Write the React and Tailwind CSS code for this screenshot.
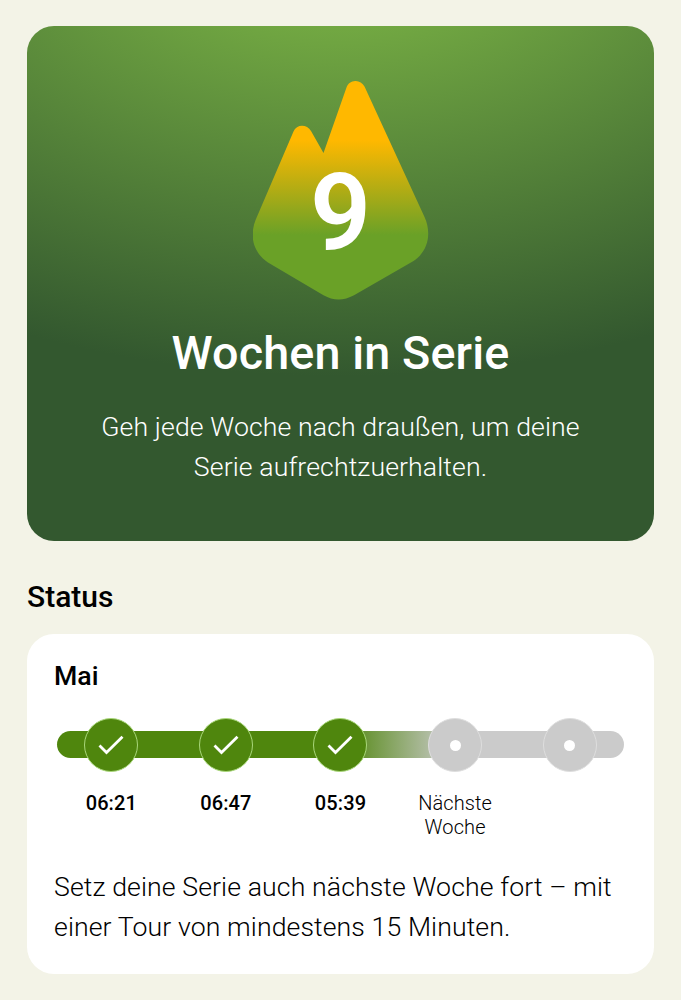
import React from "react";

const weeks = [
  { label: "06:21", done: true },
  { label: "06:47", done: true },
  { label: "05:39", done: true },
  { label: "Nächste Woche", done: false },
  { label: "", done: false },
];

const StreakFlame = ({ count }) => (
  <div className="relative h-[220px] w-[176px]">
    <svg viewBox="0 0 176 220" className="h-full w-full" fill="none">
      <defs>
        <linearGradient
          id="flame"
          x1="0"
          y1="0"
          x2="0"
          y2="220"
          gradientUnits="userSpaceOnUse"
        >
          <stop offset="0.27" stopColor="#ffb800" />
          <stop offset="0.7" stopColor="#6aa127" />
        </linearGradient>
      </defs>
      <path
        d="M70.5 72L93.500 6.500C96.500 -2 107.500 -2 111.500 5.500L171.500 136C179 152.500 175 170.500 160.500 180L101 214.300C90.500 220 80.500 220 70.500 214.300L15 181.500C0 171.500 -4 154.500 3 138L40.500 50.500C43.500 43 54 43 58 50Z"
        fill="url(#flame)"
      />
    </svg>
    <span className="absolute inset-x-0 top-[69px] text-center text-[107px] leading-[125px] font-semibold text-white">
      {count}
    </span>
  </div>
);

const WeekDot = ({ done }) => (
  <div
    className={
      done
        ? "flex size-[54px] items-center justify-center rounded-full border border-[#a9d77b] bg-[#4f860d]"
        : "flex size-[54px] items-center justify-center rounded-full border border-[#dedede] bg-[#cbcbcb]"
    }
  >
    {done ? (
      <svg viewBox="0 0 26 20" className="h-5 w-[26px]" fill="none">
        <path d="M1.500 10.500L8.500 17.500L24.500 1.800" stroke="#fff" strokeWidth="2.8" />
      </svg>
    ) : (
      <span className="size-[11px] rounded-full bg-white" />
    )}
  </div>
);

const App = () => {
  return (
    <main className="h-[1000px] w-[681px] bg-[#f3f3e7] px-[27px] pt-[26px] font-[Roboto,sans-serif] text-black">
      <section className="flex h-[515px] flex-col items-center rounded-[27px] bg-[radial-gradient(ellipse_750px_450px_at_50%_-100px,#72a842_22%,#33582f_100%)] pt-[55px] text-center text-white">
        <StreakFlame count={9} />
        <h1 className="mt-[24px] text-[46.7px] leading-[56px] font-medium tracking-[0.12px]">
          Wochen in Serie
        </h1>
        <p className="mt-[26px] w-[500px] text-[26.67px] leading-[40px] font-light tracking-[0.1px]">
          Geh jede Woche nach draußen, um deine Serie aufrechtzuerhalten.
        </p>
      </section>

      <h2 className="mt-[38px] text-[30px] leading-[36px] font-medium">
        Status
      </h2>

      <section className="mt-[19px] h-[340px] rounded-[27px] bg-white px-[27px] pt-[26px]">
        <h3 className="text-[26.67px] leading-[32px] font-medium">Mai</h3>

        <div className="relative mt-[26px]">
          <div className="absolute top-[13px] right-[3px] left-[3px] h-[27px] rounded-full bg-[linear-gradient(90deg,#4f860d_0_50%,#cbcbcb_70%)]" />
          <ol className="relative grid grid-cols-5">
            {weeks.map((week, index) => (
              <li key={index} className="flex flex-col items-center">
                <WeekDot done={week.done} />
                <span
                  className={
                    week.done
                      ? "mt-[19px] text-[20px] leading-[24px] font-medium tracking-[0.1px]"
                      : "mt-[19px] w-[80px] text-center text-[20px] leading-[24px] font-light tracking-[0.1px]"
                  }
                >
                  {week.label}
                </span>
              </li>
            ))}
          </ol>
        </div>

        <p className="mt-[28px] text-[26.67px] leading-[40px] font-light tracking-[0.1px]">
          Setz deine Serie auch nächste Woche fort – mit einer Tour von
          mindestens 15 Minuten.
        </p>
      </section>
    </main>
  );
};

export default App;
